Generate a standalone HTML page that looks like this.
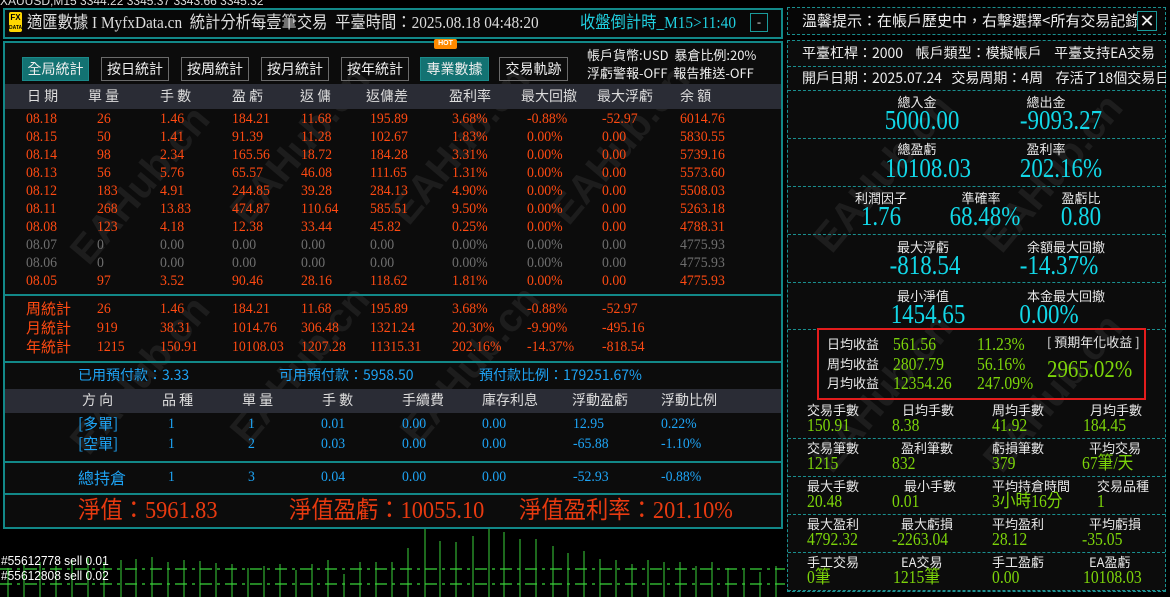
<!DOCTYPE html>
<html><head><meta charset="utf-8">
<style>
*{margin:0;padding:0;box-sizing:border-box}
body{width:1170px;height:597px;background:#000;position:relative;overflow:hidden;font-family:"Liberation Serif","Noto Sans CJK TC",serif;color:#ddd}
.a{position:absolute;white-space:nowrap}
.s{display:inline-block;transform:scaleX(.64);transform-origin:0 50%}
.row{position:absolute;left:0;height:18px;line-height:18px;font-size:15px;white-space:nowrap}
.row span{position:absolute;transform:scaleX(.92);transform-origin:0 50%}
.o{color:#ff4a12}.g{color:#6f6f6f}.b{color:#1ea4f5}
.wm{position:absolute;font:bold 40px "Liberation Sans",sans-serif;color:rgba(255,255,255,.07);transform:rotate(-50deg);white-space:nowrap}
.btn{position:absolute;top:57px;height:24px;border:1px solid #6a6a6a;color:#eee;font:14px "Noto Sans CJK TC",sans-serif;line-height:22px;text-align:center}
.btn.on{background:#137272;border-color:#1a8a8a}
.dl{position:absolute;left:0;right:0;border-top:1px dashed #1a8f8f}
.lab{position:absolute;font:13px "Noto Sans CJK TC",sans-serif;color:#e8e8e8;transform:translateX(-50%);white-space:nowrap}
.big{position:absolute;font-size:27px;color:#12d8e8;transform:translateX(-50%) scaleX(.85);white-space:nowrap;line-height:27px}
.gl{position:absolute;font:13px "Noto Sans CJK TC",sans-serif;color:#e8e8e8;white-space:nowrap;line-height:15px}
.gv{position:absolute;font-size:18px;color:#7cd40a;white-space:nowrap;line-height:18px;transform:scaleX(.87);transform-origin:0 50%}
.cj{font-family:'Noto Sans CJK TC',sans-serif}
</style></head><body>

<div class="a" style="left:0;top:-6px;font:12px 'Liberation Sans',sans-serif;color:#ddd">XAUUSD,M15 3344.22 3345.37 3343.66 3345.32</div>

<!-- chart -->
<svg class="a" style="left:0;top:528px" width="785" height="69">
<g stroke="#3ad23a" stroke-width="1">
<line x1="8" y1="40" x2="8" y2="69"/><line x1="24" y1="36" x2="24" y2="69"/><line x1="40" y1="34" x2="40" y2="69"/><line x1="56" y1="38" x2="56" y2="69"/><line x1="72" y1="32" x2="72" y2="69"/><line x1="88" y1="30" x2="88" y2="69"/><line x1="104" y1="34" x2="104" y2="69"/><line x1="121" y1="32" x2="121" y2="69"/><line x1="136" y1="31" x2="136" y2="69"/><line x1="152" y1="29" x2="152" y2="69"/><line x1="168" y1="34" x2="168" y2="69"/><line x1="184" y1="32" x2="184" y2="69"/><line x1="200" y1="33" x2="200" y2="69"/><line x1="216" y1="35" x2="216" y2="69"/><line x1="232" y1="36" x2="232" y2="69"/><line x1="248" y1="40" x2="248" y2="69"/><line x1="264" y1="38" x2="264" y2="69"/><line x1="280" y1="36" x2="280" y2="69"/><line x1="296" y1="42" x2="296" y2="69"/><line x1="312" y1="36" x2="312" y2="69"/><line x1="328" y1="32" x2="328" y2="69"/><line x1="344" y1="46" x2="344" y2="69"/><line x1="360" y1="34" x2="360" y2="69"/><line x1="376" y1="34" x2="376" y2="69"/><line x1="392" y1="34" x2="392" y2="69"/><line x1="408" y1="20" x2="408" y2="69"/><line x1="425" y1="1" x2="425" y2="69"/><line x1="440" y1="13" x2="440" y2="69"/><line x1="456" y1="14" x2="456" y2="69"/><line x1="473" y1="8" x2="473" y2="69"/><line x1="489" y1="0" x2="489" y2="69"/><line x1="504" y1="4" x2="504" y2="69"/><line x1="520" y1="11" x2="520" y2="69"/><line x1="536" y1="11" x2="536" y2="69"/><line x1="553" y1="18" x2="553" y2="69"/><line x1="568" y1="25" x2="568" y2="69"/><line x1="584" y1="23" x2="584" y2="69"/><line x1="600" y1="31" x2="600" y2="69"/><line x1="616" y1="32" x2="616" y2="69"/><line x1="632" y1="36" x2="632" y2="69"/><line x1="648" y1="32" x2="648" y2="69"/><line x1="664" y1="34" x2="664" y2="69"/><line x1="680" y1="34" x2="680" y2="69"/><line x1="696" y1="38" x2="696" y2="69"/><line x1="712" y1="34" x2="712" y2="69"/><line x1="728" y1="40" x2="728" y2="69"/><line x1="744" y1="42" x2="744" y2="69"/><line x1="760" y1="44" x2="760" y2="69"/><line x1="776" y1="38" x2="776" y2="69"/>
</g>
<g stroke="#3ad23a" stroke-width="1.3" stroke-dasharray="12,5,3,5">
<line x1="0" y1="41" x2="785" y2="41"/><line x1="0" y1="56" x2="785" y2="56"/>
</g>
</svg>
<div class="a" style="left:1px;top:553px;font:13px 'Liberation Sans',sans-serif;color:#fff;transform:scaleX(.92);transform-origin:0 0;line-height:15px">#55612778 sell 0.01<br>#55612808 sell 0.02</div>

<!-- title box -->
<div class="a" style="left:3px;top:8px;width:780px;height:31px;border:2px solid #128888;background:#080808"></div>
<div class="a" style="left:9px;top:12px;width:13px;height:20px;background:#ffd800;border-radius:2px;font:bold 8px 'Liberation Sans',sans-serif;color:#000;text-align:center;line-height:9px;padding-top:1px">FX<br><span style="font-size:5px">DATA</span></div>
<div class="a" style="left:27px;top:12px;font-size:17px;color:#ddd;line-height:22px"><span class="s" style="transform:scaleX(.9)">適匯數據 I MyfxData.cn&nbsp; 統計分析每壹筆交易&nbsp; 平臺時間：2025.08.18 04:48:20</span></div>
<div class="a" style="left:580px;top:12px;font-size:17px;color:#20d0e0;line-height:22px;background:#080808"><span class="s" style="transform:scaleX(.9)">收盤倒計時_M15&gt;11:40</span></div>
<div class="a" style="left:750px;top:13px;width:18px;height:19px;border:1px solid #1a9a9a;color:#eee;font-size:12px;text-align:center;line-height:16px">-</div>

<!-- main panel -->
<div class="a" style="left:3px;top:41px;width:780px;height:488px;border:2px solid #128888;background:#0c0c0c;overflow:hidden">
<div class="wm" style="left:40px;top:120px">EAHub.cn</div>
<div class="wm" style="left:200px;top:80px">EAHub.cn</div>
<div class="wm" style="left:360px;top:80px">EAHub.cn</div>
<div class="wm" style="left:520px;top:80px">EAHub.cn</div>
<div class="wm" style="left:40px;top:310px">EAHub.cn</div>
<div class="wm" style="left:200px;top:300px">EAHub.cn</div>
<div class="wm" style="left:370px;top:300px">EAHub.cn</div>
</div>
<div class="btn on" style="left:22px;width:67px">全局統計</div>
<div class="btn" style="left:101px;width:68px">按日統計</div>
<div class="btn" style="left:181px;width:68px">按周統計</div>
<div class="btn" style="left:261px;width:68px">按月統計</div>
<div class="btn" style="left:341px;width:68px">按年統計</div>
<div class="btn on" style="left:420px;width:69px">專業數據</div>
<div class="btn" style="left:499px;width:69px">交易軌跡</div>
<div class="a" style="left:434px;top:39px;width:23px;height:10px;background:#ff8a00;border-radius:2px;font:bold 7px 'Liberation Sans',sans-serif;color:#fff;text-align:center;line-height:10px">HOT</div>
<div class="a" style="left:587px;top:46px;font:13px 'Noto Sans CJK TC',sans-serif;color:#eee;line-height:18px">帳戶貨幣:USD&nbsp; 暴倉比例:20%<br>浮虧警報-OFF&nbsp; 報告推送-OFF</div>

<!-- header 1 -->
<div class="a" style="left:5px;top:84px;width:776px;height:25px;background:#2a2c35"></div>
<div class="row cj" style="top:87px;color:#ddd;font-size:14px"><span style="left:27px;transform:none">日 期</span><span style="left:88px;transform:none">單 量</span><span style="left:160px;transform:none">手 數</span><span style="left:232px;transform:none">盈 虧</span><span style="left:300px;transform:none">返 傭</span><span style="left:366px;transform:none">返傭差</span><span style="left:449px;transform:none">盈利率</span><span style="left:521px;transform:none">最大回撤</span><span style="left:597px;transform:none">最大浮虧</span><span style="left:680px;transform:none">余 額</span></div>

<div class="row o" style="top:110px"><span style="left:26px">08.18</span><span style="left:97px">26</span><span style="left:160px">1.46</span><span style="left:232px">184.21</span><span style="left:301px">11.68</span><span style="left:370px">195.89</span><span style="left:452px">3.68%</span><span style="left:527px">-0.88%</span><span style="left:602px">-52.97</span><span style="left:680px">6014.76</span></div>
<div class="row o" style="top:128px"><span style="left:26px">08.15</span><span style="left:97px">50</span><span style="left:160px">1.41</span><span style="left:232px">91.39</span><span style="left:301px">11.28</span><span style="left:370px">102.67</span><span style="left:452px">1.83%</span><span style="left:527px">0.00%</span><span style="left:602px">0.00</span><span style="left:680px">5830.55</span></div>
<div class="row o" style="top:146px"><span style="left:26px">08.14</span><span style="left:97px">98</span><span style="left:160px">2.34</span><span style="left:232px">165.56</span><span style="left:301px">18.72</span><span style="left:370px">184.28</span><span style="left:452px">3.31%</span><span style="left:527px">0.00%</span><span style="left:602px">0.00</span><span style="left:680px">5739.16</span></div>
<div class="row o" style="top:164px"><span style="left:26px">08.13</span><span style="left:97px">56</span><span style="left:160px">5.76</span><span style="left:232px">65.57</span><span style="left:301px">46.08</span><span style="left:370px">111.65</span><span style="left:452px">1.31%</span><span style="left:527px">0.00%</span><span style="left:602px">0.00</span><span style="left:680px">5573.60</span></div>
<div class="row o" style="top:182px"><span style="left:26px">08.12</span><span style="left:97px">183</span><span style="left:160px">4.91</span><span style="left:232px">244.85</span><span style="left:301px">39.28</span><span style="left:370px">284.13</span><span style="left:452px">4.90%</span><span style="left:527px">0.00%</span><span style="left:602px">0.00</span><span style="left:680px">5508.03</span></div>
<div class="row o" style="top:200px"><span style="left:26px">08.11</span><span style="left:97px">268</span><span style="left:160px">13.83</span><span style="left:232px">474.87</span><span style="left:301px">110.64</span><span style="left:370px">585.51</span><span style="left:452px">9.50%</span><span style="left:527px">0.00%</span><span style="left:602px">0.00</span><span style="left:680px">5263.18</span></div>
<div class="row o" style="top:218px"><span style="left:26px">08.08</span><span style="left:97px">123</span><span style="left:160px">4.18</span><span style="left:232px">12.38</span><span style="left:301px">33.44</span><span style="left:370px">45.82</span><span style="left:452px">0.25%</span><span style="left:527px">0.00%</span><span style="left:602px">0.00</span><span style="left:680px">4788.31</span></div>
<div class="row g" style="top:236px"><span style="left:26px">08.07</span><span style="left:97px">0</span><span style="left:160px">0.00</span><span style="left:232px">0.00</span><span style="left:301px">0.00</span><span style="left:370px">0.00</span><span style="left:452px">0.00%</span><span style="left:527px">0.00%</span><span style="left:602px">0.00</span><span style="left:680px">4775.93</span></div>
<div class="row g" style="top:254px"><span style="left:26px">08.06</span><span style="left:97px">0</span><span style="left:160px">0.00</span><span style="left:232px">0.00</span><span style="left:301px">0.00</span><span style="left:370px">0.00</span><span style="left:452px">0.00%</span><span style="left:527px">0.00%</span><span style="left:602px">0.00</span><span style="left:680px">4775.93</span></div>
<div class="row o" style="top:272px"><span style="left:26px">08.05</span><span style="left:97px">97</span><span style="left:160px">3.52</span><span style="left:232px">90.46</span><span style="left:301px">28.16</span><span style="left:370px">118.62</span><span style="left:452px">1.81%</span><span style="left:527px">0.00%</span><span style="left:602px">0.00</span><span style="left:680px">4775.93</span></div>
<div class="a" style="left:3px;top:294px;width:780px;height:2px;background:#128888"></div>
<div class="row o" style="top:300px"><span class="cj" style="left:26px;transform:none">周統計</span><span style="left:97px">26</span><span style="left:160px">1.46</span><span style="left:232px">184.21</span><span style="left:301px">11.68</span><span style="left:370px">195.89</span><span style="left:452px">3.68%</span><span style="left:527px">-0.88%</span><span style="left:602px">-52.97</span></div>
<div class="row o" style="top:319px"><span class="cj" style="left:26px;transform:none">月統計</span><span style="left:97px">919</span><span style="left:160px">38.31</span><span style="left:232px">1014.76</span><span style="left:301px">306.48</span><span style="left:370px">1321.24</span><span style="left:452px">20.30%</span><span style="left:527px">-9.90%</span><span style="left:602px">-495.16</span></div>
<div class="row o" style="top:338px"><span class="cj" style="left:26px;transform:none">年統計</span><span style="left:97px">1215</span><span style="left:160px">150.91</span><span style="left:232px">10108.03</span><span style="left:301px">1207.28</span><span style="left:370px">11315.31</span><span style="left:452px">202.16%</span><span style="left:527px">-14.37%</span><span style="left:602px">-818.54</span></div>
<div class="a" style="left:3px;top:361px;width:780px;height:2px;background:#128888"></div>

<div class="row b cj" style="top:366px;font-size:14px"><span style="left:78px;transform:none">已用預付款：3.33</span><span style="left:279px;transform:none">可用預付款：5958.50</span><span style="left:479px;transform:none">預付款比例：179251.67%</span></div>
<div class="a" style="left:5px;top:389px;width:776px;height:24px;background:#2a2c35"></div>
<div class="row cj" style="top:391px;color:#ddd;font-size:14px"><span style="left:82px;transform:none">方 向</span><span style="left:162px;transform:none">品 種</span><span style="left:242px;transform:none">單 量</span><span style="left:322px;transform:none">手 數</span><span style="left:402px;transform:none">手續費</span><span style="left:482px;transform:none">庫存利息</span><span style="left:572px;transform:none">浮動盈虧</span><span style="left:661px;transform:none">浮動比例</span></div>
<div class="row b" style="top:415px"><span class="cj" style="left:78px;transform:none">[多單]</span><span style="left:168px">1</span><span style="left:248px">1</span><span style="left:321px">0.01</span><span style="left:402px">0.00</span><span style="left:482px">0.00</span><span style="left:573px">12.95</span><span style="left:661px">0.22%</span></div>
<div class="row b" style="top:435px"><span class="cj" style="left:78px;transform:none">[空單]</span><span style="left:168px">1</span><span style="left:248px">2</span><span style="left:321px">0.03</span><span style="left:402px">0.00</span><span style="left:482px">0.00</span><span style="left:573px">-65.88</span><span style="left:661px">-1.10%</span></div>
<div class="a" style="left:3px;top:461px;width:780px;height:2px;background:#128888"></div>
<div class="row b" style="top:468px"><span class="cj" style="left:78px;transform:none;font-size:16px">總持倉</span><span style="left:168px">1</span><span style="left:248px">3</span><span style="left:321px">0.04</span><span style="left:402px">0.00</span><span style="left:482px">0.00</span><span style="left:573px">-52.93</span><span style="left:661px">-0.88%</span></div>
<div class="a" style="left:3px;top:493px;width:780px;height:2px;background:#128888"></div>
<div class="row o" style="top:497px;height:28px;line-height:28px;font-size:24px;color:#e83a10"><span style="left:78px;transform:scaleX(.93)">淨值：5961.83</span><span style="left:289px;transform:scaleX(.93)">淨值盈虧：10055.10</span><span style="left:519px;transform:scaleX(.93)">淨值盈利率：201.10%</span></div>

<!-- right side -->
<div class="a" style="left:787px;top:7px;width:379px;height:28px;border:1px dashed #1a8f8f;background:#060606"></div>
<div class="a" style="left:802px;top:11px;font:15px 'Noto Sans CJK TC',sans-serif;color:#eee;line-height:20px;width:335px;overflow:hidden">溫馨提示：在帳戶歷史中，右擊選擇&lt;所有交易記錄&gt;</div>
<div class="a" style="left:1137px;top:11px;width:20px;height:20px;border:1px solid #1a9a9a;background:#060606;color:#eee;font:18px 'Liberation Sans',sans-serif;line-height:18px;text-align:center">✕</div>

<div class="a" style="left:787px;top:40px;width:379px;height:552px;border:1px dashed #1a8f8f;background:#0c0c0c;overflow:hidden">
<div class="wm" style="left:0;top:110px">EAHub.cn</div>
<div class="wm" style="left:170px;top:110px">EAHub.cn</div>
<div class="wm" style="left:0;top:330px">EAHub.cn</div>
<div class="wm" style="left:170px;top:330px">EAHub.cn</div>
<div class="dl" style="top:25px"></div>
<div class="dl" style="top:49px"></div>
<div class="dl" style="top:97px"></div>
<div class="dl" style="top:145px"></div>
<div class="dl" style="top:193px"></div>
<div class="dl" style="top:241px"></div>
<div class="dl" style="top:288px"></div>
<div class="dl" style="top:397px"></div>
<div class="dl" style="top:435px"></div>
<div class="dl" style="top:473px"></div>
<div class="dl" style="top:511px"></div>
<div class="dl" style="top:549px"></div>
</div>
<div class="a" style="left:802px;top:44px;font:14px 'Noto Sans CJK TC',sans-serif;color:#eee;line-height:18px;width:364px;overflow:hidden">平臺杠桿：2000&nbsp;&nbsp;&nbsp; 帳戶類型：模擬帳戶&nbsp;&nbsp;&nbsp; 平臺支持EA交易</div>
<div class="a" style="left:802px;top:69px;font:14px 'Noto Sans CJK TC',sans-serif;color:#eee;line-height:18px;width:364px;overflow:hidden">開戶日期：2025.07.24&nbsp;&nbsp; 交易周期：4周&nbsp;&nbsp;&nbsp; 存活了18個交易日</div>

<div class="lab" style="left:917px;top:92px">總入金</div><div class="lab" style="left:1046px;top:92px">總出金</div>
<div class="big" style="left:922px;top:107px">5000.00</div><div class="big" style="left:1061px;top:107px">-9093.27</div>
<div class="lab" style="left:917px;top:139px">總盈虧</div><div class="lab" style="left:1046px;top:139px">盈利率</div>
<div class="big" style="left:928px;top:155px">10108.03</div><div class="big" style="left:1061px;top:155px">202.16%</div>
<div class="lab" style="left:881px;top:188px">利潤因子</div><div class="lab" style="left:981px;top:188px">準確率</div><div class="lab" style="left:1081px;top:188px">盈虧比</div>
<div class="big" style="left:881px;top:203px">1.76</div><div class="big" style="left:985px;top:203px">68.48%</div><div class="big" style="left:1081px;top:203px">0.80</div>
<div class="lab" style="left:923px;top:237px">最大浮虧</div><div class="lab" style="left:1066px;top:237px">余額最大回撤</div>
<div class="big" style="left:925px;top:252px">-818.54</div><div class="big" style="left:1059px;top:252px">-14.37%</div>
<div class="lab" style="left:923px;top:286px">最小淨值</div><div class="lab" style="left:1066px;top:286px">本金最大回撤</div>
<div class="big" style="left:928px;top:301px">1454.65</div><div class="big" style="left:1049px;top:301px">0.00%</div>

<div class="a" style="left:817px;top:328px;width:329px;height:72px;border:2px solid #e41c1c"></div>
<div class="gl" style="left:827px;top:336px">日均收益</div><div class="gl" style="left:827px;top:356px">周均收益</div><div class="gl" style="left:827px;top:375px">月均收益</div>
<div class="gv" style="left:893px;top:335px">561.56</div><div class="gv" style="left:893px;top:355px">2807.79</div><div class="gv" style="left:893px;top:374px">12354.26</div>
<div class="gv" style="left:977px;top:335px">11.23%</div><div class="gv" style="left:977px;top:355px">56.16%</div><div class="gv" style="left:977px;top:374px">247.09%</div>
<div class="gl" style="left:1047px;top:334px">[ 預期年化收益 ]</div>
<div class="gv" style="left:1047px;top:358px;font-size:24px;line-height:24px">2965.02%</div>

<div class="gl" style="left:807px;top:402px">交易手數</div><div class="gl" style="left:902px;top:402px">日均手數</div><div class="gl" style="left:992px;top:402px">周均手數</div><div class="gl" style="left:1090px;top:402px">月均手數</div>
<div class="gv" style="left:807px;top:416px">150.91</div><div class="gv" style="left:892px;top:416px">8.38</div><div class="gv" style="left:992px;top:416px">41.92</div><div class="gv" style="left:1083px;top:416px">184.45</div>
<div class="gl" style="left:807px;top:440px">交易筆數</div><div class="gl" style="left:901px;top:440px">盈利筆數</div><div class="gl" style="left:992px;top:440px">虧損筆數</div><div class="gl" style="left:1089px;top:440px">平均交易</div>
<div class="gv" style="left:807px;top:454px">1215</div><div class="gv" style="left:892px;top:454px">832</div><div class="gv" style="left:992px;top:454px">379</div><div class="gv" style="left:1082px;top:454px">67筆/天</div>
<div class="gl" style="left:807px;top:478px">最大手數</div><div class="gl" style="left:904px;top:478px">最小手數</div><div class="gl" style="left:992px;top:478px">平均持倉時間</div><div class="gl" style="left:1097px;top:478px">交易品種</div>
<div class="gv" style="left:807px;top:492px">20.48</div><div class="gv" style="left:892px;top:492px">0.01</div><div class="gv" style="left:992px;top:492px">3小時16分</div><div class="gv" style="left:1097px;top:492px">1</div>
<div class="gl" style="left:807px;top:516px">最大盈利</div><div class="gl" style="left:901px;top:516px">最大虧損</div><div class="gl" style="left:992px;top:516px">平均盈利</div><div class="gl" style="left:1089px;top:516px">平均虧損</div>
<div class="gv" style="left:807px;top:530px">4792.32</div><div class="gv" style="left:892px;top:530px">-2263.04</div><div class="gv" style="left:992px;top:530px">28.12</div><div class="gv" style="left:1082px;top:530px">-35.05</div>
<div class="gl" style="left:807px;top:554px">手工交易</div><div class="gl" style="left:901px;top:554px">EA交易</div><div class="gl" style="left:992px;top:554px">手工盈虧</div><div class="gl" style="left:1089px;top:554px">EA盈虧</div>
<div class="gv" style="left:807px;top:568px">0筆</div><div class="gv" style="left:893px;top:568px">1215筆</div><div class="gv" style="left:992px;top:568px">0.00</div><div class="gv" style="left:1083px;top:568px">10108.03</div>
<div class="a" style="left:1166px;top:0;width:4px;height:597px;background:#000"></div>
</body></html>
